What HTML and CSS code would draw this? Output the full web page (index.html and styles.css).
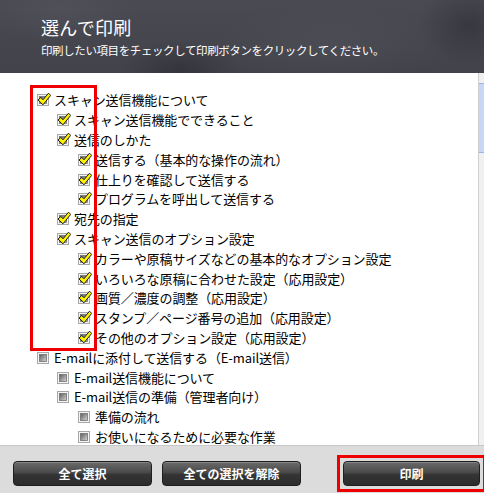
FILE: index.html
```html
<!DOCTYPE html>
<html lang="ja">
<head>
<meta charset="utf-8">
<title>選んで印刷</title>
<link rel="stylesheet" href="styles.css">
</head>
<body>
<svg class="defs" width="0" height="0" aria-hidden="true">
  <defs>
    <linearGradient id="g-in" x1="0" y1="0" x2="1" y2="1">
      <stop offset="0" stop-color="#5a5a5a"/>
      <stop offset="1" stop-color="#d8d8d8"/>
    </linearGradient>
    <symbol id="box" viewBox="0 0 15 15">
      <rect x="1.5" y="2.5" width="11" height="11" fill="#f4f4f4" stroke="#a8a8a8"/>
      <rect x="3.5" y="4.5" width="7" height="7" fill="url(#g-in)" stroke="#707070" stroke-width="0.8"/>
    </symbol>
    <symbol id="chk" viewBox="0 0 15 15">
      <rect x="1.5" y="2.5" width="11" height="11" fill="#f4f4f4" stroke="#a8a8a8"/>
      <rect x="3.5" y="4.5" width="7" height="7" fill="url(#g-in)" stroke="#707070" stroke-width="0.8"/>
      <path d="M2 8 L4.8 5.5 L7 7.8 L12.5 1.2 L14.7 3.4 L7 12.8 Z" fill="#fff200" stroke="#1a1a1a" stroke-width="1" stroke-linejoin="round"/>
    </symbol>
  </defs>
</svg>
<div class="app">
  <header class="head">
    <h1 class="title">選んで印刷</h1>
    <p class="sub">印刷したい項目をチェックして印刷ボタンをクリックしてください。</p>
  </header>
  <main class="listwrap">
    <ul class="list">
      <li class="lv0"><svg class="cb"><use href="#chk"/></svg><span>スキャン送信機能について</span></li>
      <li class="lv1"><svg class="cb"><use href="#chk"/></svg><span>スキャン送信機能でできること</span></li>
      <li class="lv1"><svg class="cb"><use href="#chk"/></svg><span>送信のしかた</span></li>
      <li class="lv2"><svg class="cb"><use href="#chk"/></svg><span>送信する（基本的な操作の流れ）</span></li>
      <li class="lv2"><svg class="cb"><use href="#chk"/></svg><span>仕上りを確認して送信する</span></li>
      <li class="lv2"><svg class="cb"><use href="#chk"/></svg><span>プログラムを呼出して送信する</span></li>
      <li class="lv1"><svg class="cb"><use href="#chk"/></svg><span>宛先の指定</span></li>
      <li class="lv1"><svg class="cb"><use href="#chk"/></svg><span>スキャン送信のオプション設定</span></li>
      <li class="lv2"><svg class="cb"><use href="#chk"/></svg><span>カラーや原稿サイズなどの基本的なオプション設定</span></li>
      <li class="lv2"><svg class="cb"><use href="#chk"/></svg><span>いろいろな原稿に合わせた設定（応用設定）</span></li>
      <li class="lv2"><svg class="cb"><use href="#chk"/></svg><span>画質／濃度の調整（応用設定）</span></li>
      <li class="lv2"><svg class="cb"><use href="#chk"/></svg><span>スタンプ／ページ番号の追加（応用設定）</span></li>
      <li class="lv2"><svg class="cb"><use href="#chk"/></svg><span>その他のオプション設定（応用設定）</span></li>
      <li class="lv0"><svg class="cb"><use href="#box"/></svg><span>E-mailに添付して送信する（E-mail送信）</span></li>
      <li class="lv1"><svg class="cb"><use href="#box"/></svg><span>E-mail送信機能について</span></li>
      <li class="lv1"><svg class="cb"><use href="#box"/></svg><span>E-mail送信の準備（管理者向け）</span></li>
      <li class="lv2"><svg class="cb"><use href="#box"/></svg><span>準備の流れ</span></li>
      <li class="lv2"><svg class="cb"><use href="#box"/></svg><span>お使いになるために必要な作業</span></li>
    </ul>
    <div class="scroll"><div class="thumb"></div></div>
    <div class="mark"></div>
  </main>
  <footer class="foot">
    <div class="btns">
      <button class="btn">全て選択</button>
      <button class="btn">全ての選択を解除</button>
    </div>
    <div class="sep"></div>
    <div class="printwrap">
      <button class="btn">印刷</button>
    </div>
  </footer>
</div>
</body>
</html>
```
FILE: styles.css
```css
html, body {
  margin: 0;
  padding: 0;
}
body {
  width: 484px;
  height: 493px;
  overflow: hidden;
  font-family: "Noto Sans CJK JP", "Noto Sans", sans-serif;
  background: #ffffff;
}
.defs {
  position: absolute;
  width: 0;
  height: 0;
}
.app {
  display: flex;
  flex-direction: column;
  width: 484px;
  height: 493px;
}
.head {
  height: 73px;
  box-sizing: border-box;
  padding: 14px 0 0 41px;
  background:
    radial-gradient(ellipse 60px 30px at 180px 70px, rgba(20,20,28,0.3), transparent),
    radial-gradient(ellipse 50px 40px at 470px 25px, rgba(20,20,28,0.3), transparent),
    radial-gradient(ellipse 80px 30px at 60px 10px, rgba(100,100,110,0.25), transparent),
    radial-gradient(ellipse 120px 40px at 330px 45px, rgba(100,100,110,0.2), transparent),
    linear-gradient(180deg, #4a4a53 0%, #42424b 100%);
  color: #ffffff;
}
.title {
  margin: 0;
  font-size: 18px;
  font-weight: normal;
  line-height: 26px;
  letter-spacing: 0.3px;
}
.sub {
  margin: 2px 0 0;
  font-size: 11.5px;
  line-height: 16px;
  letter-spacing: -0.4px;
}
.listwrap {
  position: relative;
  flex: 1;
  display: flex;
  overflow: hidden;
  background: #ffffff;
}
.list {
  flex: 1;
  margin: 0;
  padding: 17px 0 0;
  list-style: none;
  color: #000000;
  font-size: 13px;
}
.list li {
  display: flex;
  align-items: center;
  height: 19.8px;
  white-space: nowrap;
}
.list li span {
  margin-left: 3px;
  letter-spacing: -0.1px;
}
.cb {
  width: 15px;
  height: 15px;
  flex: none;
}
.lv0 { padding-left: 36px; }
.lv1 { padding-left: 56px; }
.lv2 { padding-left: 77px; }
.scroll {
  width: 5px;
  border-left: 1px solid #cfcfcf;
  background: #f0f0ee;
  padding-top: 10px;
}
.thumb {
  height: 68px;
  background: #c9d6f5;
  border-top: 1px solid #9fb3e8;
  border-bottom: 1px solid #9fb3e8;
}
.mark {
  position: absolute;
  left: 30px;
  top: 12px;
  width: 61px;
  height: 260px;
  border: 3px solid #ee0000;
}
.foot {
  height: 48px;
  flex: none;
  display: flex;
  align-items: flex-start;
  background: #dcdcdc;
  border-top: 1px solid #c8c8c8;
  box-sizing: border-box;
}
.btns {
  display: flex;
  gap: 10px;
  padding: 15px 0 0 13px;
}
.btn {
  width: 139px;
  height: 25px;
  border: 1px solid #1e1e1e;
  border-radius: 4px;
  background: linear-gradient(180deg, #6a6a6a 0%, #4a4a4a 45%, #343434 55%, #2c2c2c 100%);
  color: #ffffff;
  font-family: "Noto Sans CJK JP", sans-serif;
  font-size: 12px;
  font-weight: bold;
  padding: 0;
  box-shadow: inset 0 1px 0 rgba(255,255,255,0.2);
}
.sep {
  width: 1px;
  height: 34px;
  margin: 8px 0 0 22px;
  background: #b8b8b8;
  box-shadow: 1px 0 0 #f4f4f4;
}
.printwrap {
  margin: 9px 0 0 14px;
  border: 3px solid #ee0000;
  padding: 3px;
}
.printwrap .btn {
  width: 137px;
  display: block;
}
```
